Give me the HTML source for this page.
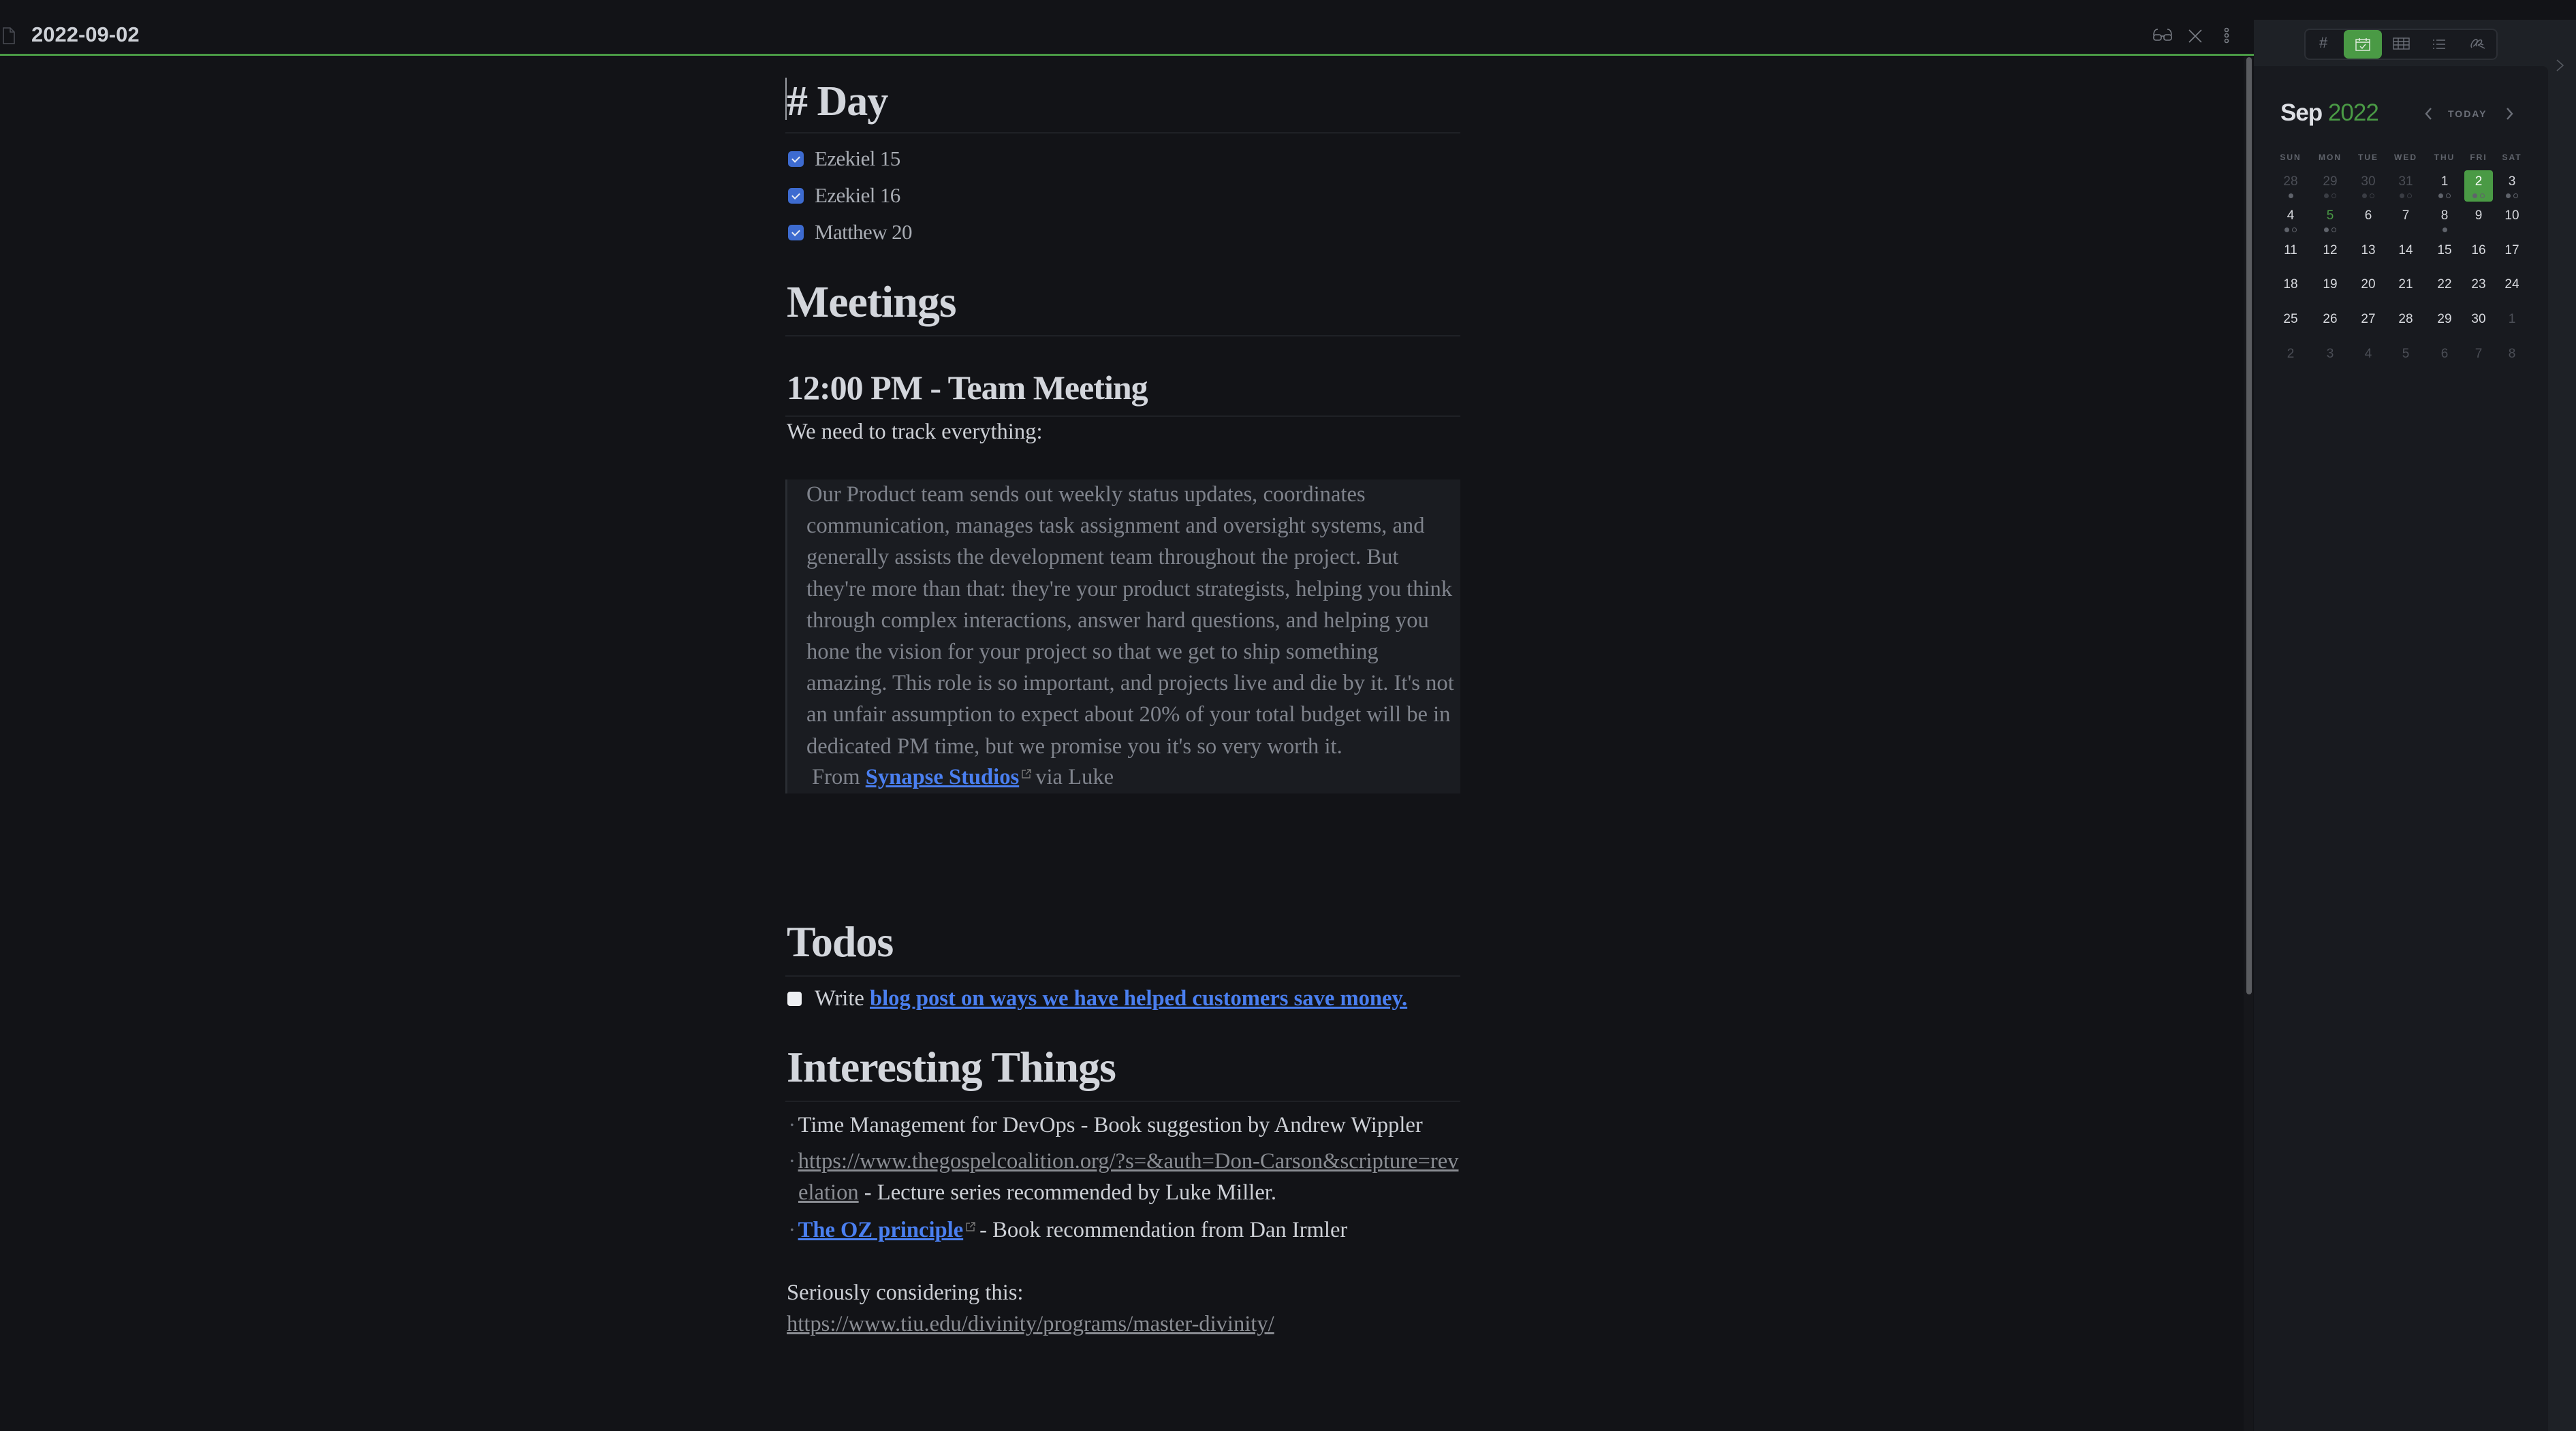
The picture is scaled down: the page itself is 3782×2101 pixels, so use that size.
<!DOCTYPE html>
<html><head><meta charset="utf-8"><style>
*{margin:0;padding:0;box-sizing:border-box}
html,body{width:3782px;height:2101px;overflow:hidden;background:#121317}
body{position:relative;font-family:"Liberation Serif",serif;color:#cdd0d6}
.a{position:absolute;white-space:nowrap}
.h{font-weight:bold;color:#d3d6dc;letter-spacing:-1px}
.hr{position:absolute;left:1153px;width:991px;height:2px;background:#1f2126}
.t{font-size:32.6px;letter-spacing:0;line-height:46px}
.cb{position:absolute;width:23px;height:23px;border-radius:5px;background:#3d6bd0}
.cb:after{content:"";position:absolute;left:8px;top:5px;width:5px;height:9px;border:solid #e8ecf4;border-width:0 2px 2px 0;transform:rotate(45deg)}
a{color:#4a7ff0;text-decoration:underline;font-weight:bold}
.g{color:#8a8d93;text-decoration:underline;font-weight:normal}
.ext{display:inline-block;width:14px;height:14px;margin:0 6px 0 4px;vertical-align:8px}
.dn{position:absolute;width:50px;margin-left:-25px;text-align:center;font-family:"Liberation Sans",sans-serif;font-size:19px;color:#d7d9de}
.dot{position:absolute;width:7px;height:7px;border-radius:50%;background:#5f636b}
.ho{position:absolute;width:7px;height:7px;border-radius:50%;border:1.5px solid #5f636b}
.bu{color:#6b6f78;font-size:16px;vertical-align:5px;margin-left:2px;margin-right:6px}
</style></head><body>
<svg width="0" height="0" style="position:absolute"><defs><symbol id="ex" viewBox="0 0 14 14"><g fill="none" stroke="#777" stroke-width="1.4"><path d="M6 2H1V13H12V8"/><path d="M8 1H13V6M13 1L6 8"/></g></symbol></defs></svg>
<!-- top bar -->
<svg class="a" style="left:4px;top:40px" width="18" height="25"><path d="M1 1H11L17 7V24H1Z" fill="none" stroke="#4a4d55" stroke-width="1.5"/><path d="M11 1V7H17" fill="none" stroke="#4a4d55" stroke-width="1.5"/></svg>
<div class="a" style="left:46px;top:33px;font-family:'Liberation Sans',sans-serif;font-weight:bold;font-size:31px;color:#cdd0d6">2022-09-02</div>
<svg class="a" style="left:3160px;top:40px" width="30" height="22"><g fill="none" stroke="#7a7e86" stroke-width="1.6"><path d="M2 12C2 5 5 3 8 3M28 12C28 5 25 3 22 3"/><rect x="2" y="11" width="11" height="8" rx="3"/><rect x="17" y="11" width="11" height="8" rx="3"/><path d="M13 13H17"/></g></svg>
<svg class="a" style="left:3212px;top:42px" width="22" height="22"><path d="M2 2L20 20M20 2L2 20" stroke="#7a7e86" stroke-width="1.6"/></svg>
<svg class="a" style="left:3262px;top:40px" width="14" height="26"><g fill="none" stroke="#7a7e86" stroke-width="1.6"><circle cx="7" cy="4" r="2.5"/><circle cx="7" cy="12" r="2.5"/><circle cx="7" cy="20" r="2.5"/></g></svg>
<div class="a" style="left:0;top:79px;width:3309px;height:3px;background:#4a9a45"></div>
<!-- scrollbar -->
<div class="a" style="left:3294px;top:82px;width:14px;height:2019px;background:#16171b"></div>
<div class="a" style="left:3298px;top:84px;width:8px;height:1376px;border-radius:4px;background:#5a5c60"></div>
<!-- sidebar -->
<div class="a" style="left:3309px;top:0;width:473px;height:2101px;background:#1e2126"></div>
<div class="a" style="left:3309px;top:0;width:473px;height:29px;background:#121317"></div>
<div class="a" style="left:3309px;top:97px;width:432px;height:2004px;background:#181a1f;border-top-right-radius:8px"></div>
<svg class="a" style="left:3752px;top:86px" width="14" height="20"><path d="M2 2L11 10L2 18" fill="none" stroke="#555960" stroke-width="1.6"/></svg>
<div class="a" style="left:3383px;top:42px;width:284px;height:46px;border:2px solid #2c2f35;border-radius:8px;background:#181a1f"></div>
<div class="a" style="left:3441px;top:44px;width:56px;height:42px;border-radius:7px;background:#4a9a45"></div>
<div class="a" style="left:3405px;top:50px;font-family:'Liberation Sans',sans-serif;font-size:22px;color:#6b6f78">#</div>
<svg class="a" style="left:3457px;top:54px" width="24" height="22"><g fill="none" stroke="#e6eee4" stroke-width="1.4"><rect x="2" y="4" width="20" height="16"/><path d="M2 8H22M7 2V6M17 2V6M8 14L11 17L16 11"/></g></svg>
<svg class="a" style="left:3513px;top:55px" width="26" height="18"><g fill="none" stroke="#6b6f78" stroke-width="1.4"><rect x="1" y="1" width="23" height="16"/><path d="M1 6H24M1 11H24M8 1V17M16 1V17"/></g></svg>
<svg class="a" style="left:3571px;top:57px" width="20" height="16"><g stroke="#6b6f78" stroke-width="1.6"><path d="M6 2H19M6 8H19M6 14H19"/><path d="M1 2H3M1 8H3M1 14H3"/></g></svg>
<svg class="a" style="left:3626px;top:54px" width="24" height="20"><g fill="none" stroke="#6b6f78" stroke-width="1.5"><path d="M3 16C0 12 6 3 10 4C13 5 9 12 5 14M10 14C8 10 14 3 17 5C19 7 15 12 12 12L22 17M15 10L20 12"/></g></svg>
<!-- calendar -->
<div class="a" style="left:3348px;top:146px;font-family:'Liberation Sans',sans-serif;font-weight:bold;font-size:35px;letter-spacing:-1px;color:#dcdee3">Sep <span style="color:#4a9a45;font-weight:normal">2022</span></div>
<svg class="a" style="left:3558px;top:157px" width="14" height="20"><path d="M11 2L4 10L11 18" fill="none" stroke="#6b6f78" stroke-width="2.4"/></svg>
<div class="a" style="left:3594px;top:159px;font-family:'Liberation Sans',sans-serif;font-weight:bold;font-size:14px;letter-spacing:2px;color:#6b6f78">TODAY</div>
<svg class="a" style="left:3678px;top:157px" width="14" height="20"><path d="M3 2L10 10L3 18" fill="none" stroke="#6b6f78" stroke-width="2.4"/></svg>
<div class="a" style="left:3618px;top:250px;width:42px;height:46px;border-radius:4px;background:#4a9a45"></div>
<div id="cal"></div>
<script>
(function(){
var cx=[3363,3421,3477,3532,3589,3639,3688],ry=[268,318,369,419,470,521];
var h=["SUN","MON","TUE","WED","THU","FRI","SAT"],s="";
for(var i=0;i<7;i++)s+='<div class="a" style="left:'+(cx[i]-25)+'px;width:50px;text-align:center;top:224px;font-family:Liberation Sans,sans-serif;font-weight:bold;font-size:12px;letter-spacing:2px;color:#60646c">'+h[i]+'</div>';
var d=[28,29,30,31,1,2,3];for(var n=4;n<=30;n++)d.push(n);d=d.concat([1,2,3,4,5,6,7,8]);
var dots={0:"f",1:"fh",2:"fh",3:"fh",4:"fh",5:"fh",6:"fh",7:"fh",8:"fh",11:"f"};
for(var k=0;k<42;k++){var r=Math.floor(k/7),c=k%7,v=d[k];var m=(k<4||k>33);
var col=m?"#4b4e56":(k==8?"#4a9a45":(k==5?"#fff":"#d7d9de"));
s+='<div class="dn" style="left:'+cx[c]+'px;top:'+(ry[r]-12)+'px;color:'+col+'">'+v+'</div>';
var t=dots[k];if(t){var y=ry[r]+16;if(t=="f")s+='<div class="dot" style="left:'+(cx[c]-3)+'px;top:'+y+'px"></div>';
else s+='<div class="dot" style="left:'+(cx[c]-9)+'px;top:'+y+'px;'+(k<4?'background:#3a3d44':'')+'"></div><div class="ho" style="left:'+(cx[c]+2)+'px;top:'+y+'px;'+(k<4?'border-color:#3a3d44':'')+'"></div>';}}
document.getElementById("cal").outerHTML=s;})();
</script>
<!-- main content -->
<div class="a" style="left:1153px;top:114px;width:2px;height:62px;background:#9a9da3"></div>
<div class="a h" style="left:1155px;top:114px;font-size:62px">#&nbsp;Day</div>
<div class="hr" style="top:194px"></div>
<div class="cb" style="left:1157px;top:222px"></div><div class="a t" style="left:1196px;top:210px;color:#a9adb4;font-size:31px;letter-spacing:-0.6px">Ezekiel 15</div>
<div class="cb" style="left:1157px;top:276px"></div><div class="a t" style="left:1196px;top:264px;color:#a9adb4;font-size:31px;letter-spacing:-0.6px">Ezekiel 16</div>
<div class="cb" style="left:1157px;top:330px"></div><div class="a t" style="left:1196px;top:318px;color:#a9adb4;font-size:31px;letter-spacing:-0.6px">Matthew 20</div>
<div class="a h" style="left:1155px;top:406px;font-size:66px">Meetings</div>
<div class="hr" style="top:492px"></div>
<div class="a h" style="left:1155px;top:540px;font-size:50px">12:00 PM - Team Meeting</div>
<div class="hr" style="top:610px"></div>
<div class="a t" style="left:1155px;top:611px">We need to track everything:</div>
<div class="a" style="left:1153px;top:704px;width:991px;height:461px;background:#1a1c21;border-left:3px solid #2a2d33"></div>
<div class="a t" style="left:1184px;top:703px;color:#7f838c;line-height:46.2px">Our Product team sends out weekly status updates, coordinates<br>communication, manages task assignment and oversight systems, and<br>generally assists the development team throughout the project. But<br>they're more than that: they're your product strategists, helping you think<br>through complex interactions, answer hard questions, and helping you<br>hone the vision for your project so that we get to ship something<br>amazing. This role is so important, and projects live and die by it. It's not<br>an unfair assumption to expect about 20% of your total budget will be in<br>dedicated PM time, but we promise you it's so very worth it.</div>
<div class="a t" style="left:1192px;top:1118px;color:#7f838c">From <a>Synapse Studios</a><svg class="ext"><use href="#ex"/></svg>via Luke</div>
<div class="a h" style="left:1155px;top:1346px;font-size:64px">Todos</div>
<div class="hr" style="top:1432px"></div>
<div class="a" style="left:1156px;top:1456px;width:21px;height:21px;border-radius:4px;background:#eef0f3"></div>
<div class="a t" style="left:1196px;top:1443px">Write <a>blog post on ways we have helped customers save money.</a></div>
<div class="a h" style="left:1155px;top:1530px;font-size:64px">Interesting Things</div>
<div class="hr" style="top:1616px"></div>
<div class="a t" style="left:1158px;top:1629px"><span class="bu">•</span>Time Management for DevOps - Book suggestion by Andrew Wippler</div>
<div class="a t" style="left:1158px;top:1682px"><span class="bu">•</span><a class="g">https://www.thegospelcoalition.org/?s=&amp;auth=Don-Carson&amp;scripture=rev</a></div>
<div class="a t" style="left:1172px;top:1728px"><a class="g">elation</a> - Lecture series recommended by Luke Miller.</div>
<div class="a t" style="left:1158px;top:1783px"><span class="bu">•</span><a>The OZ principle</a><svg class="ext"><use href="#ex"/></svg>- Book recommendation from Dan Irmler</div>
<div class="a t" style="left:1155px;top:1875px">Seriously considering this:</div>
<div class="a t" style="left:1155px;top:1921px"><a class="g">https://www.tiu.edu/divinity/programs/master-divinity/</a></div>
</body></html>
